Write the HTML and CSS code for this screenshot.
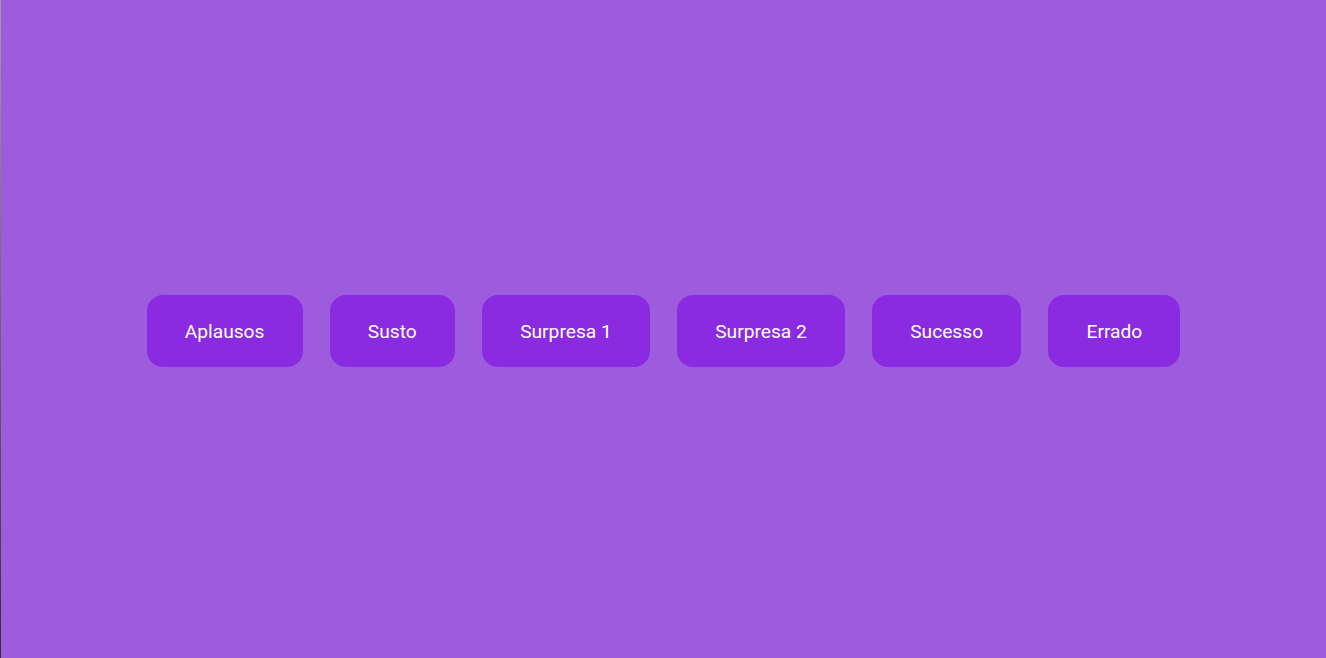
FILE: index.html
```html
<!DOCTYPE html>
<html lang="pt-BR">
<head>
<meta charset="utf-8">
<title>Sons</title>
<link rel="stylesheet" href="styles.css">
</head>
<body>
<main class="board">
  <button class="btn">Aplausos</button>
  <button class="btn">Susto</button>
  <button class="btn">Surpresa 1</button>
  <button class="btn">Surpresa 2</button>
  <button class="btn">Sucesso</button>
  <button class="btn">Errado</button>
</main>
</body>
</html>
```
FILE: styles.css
```css
html, body {
  margin: 0;
  height: 100%;
}
body {
  background: #9d5cde;
  font-family: Roboto, "Liberation Sans", sans-serif;
  border-left: 1px solid #8f8f8f;
  border-image: linear-gradient(#a0a0a0, #303030) 1;
  box-sizing: border-box;
}
.board {
  height: 100%;
  display: flex;
  align-items: center;
  justify-content: center;
  gap: 27px;
  padding-top: 4px;
  box-sizing: border-box;
}
.btn {
  font-family: inherit;
  font-size: 19.2px;
  color: #ffffff;
  background: #8a2be2;
  border: none;
  border-radius: 16px;
  height: 72px;
  padding: 2px 38.2px 0;
  line-height: 70px;
  cursor: pointer;
}
```
